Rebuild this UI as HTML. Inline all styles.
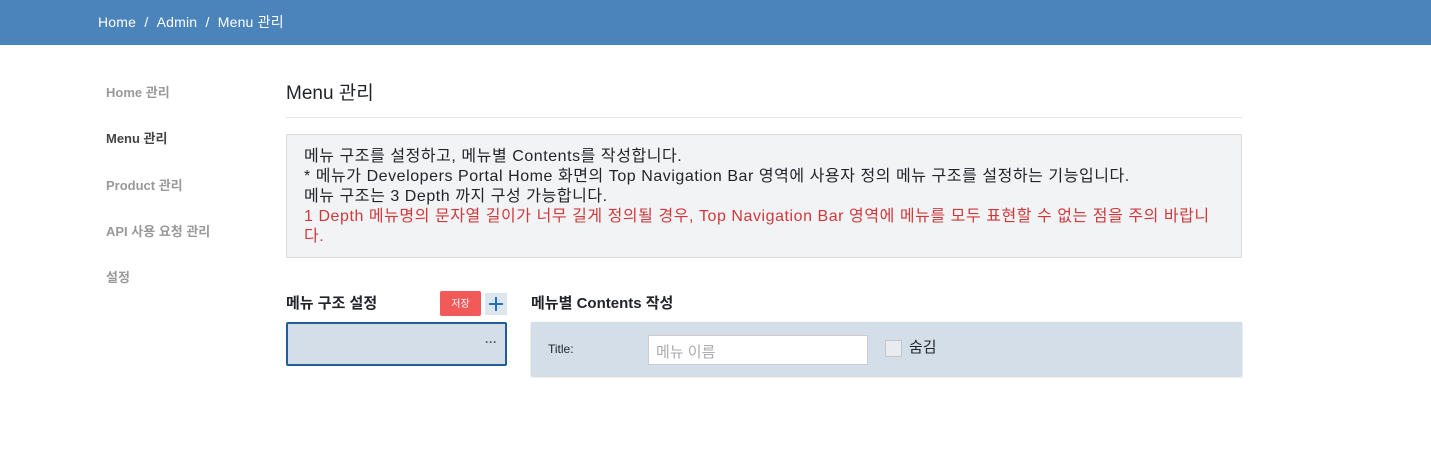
<!DOCTYPE html>
<html><head><meta charset="utf-8"><style>
*{margin:0;padding:0;box-sizing:border-box}
body{width:1431px;height:449px;background:#fff;font-family:"Liberation Sans","Noto Sans CJK KR",sans-serif;color:#212529;position:relative;overflow:hidden}
.top{position:absolute;left:0;top:0;width:1431px;height:45px;background:#4a84bb;color:#fff;font-size:14px}
.top span{position:absolute;top:12px;letter-spacing:0.2px}
.side{position:absolute;left:106px;font-size:13px;font-weight:bold;color:#999}
.a{position:absolute}
</style></head><body>
<div class="top"><span style="left:98px">Home&nbsp;&nbsp;/&nbsp;&nbsp;Admin&nbsp;&nbsp;/&nbsp;&nbsp;Menu 관리</span></div>
<div class="side" style="top:82px">Home 관리</div>
<div class="side" style="top:128px;color:#444">Menu 관리</div>
<div class="side" style="top:175px">Product 관리</div>
<div class="side" style="top:221px">API 사용 요청 관리</div>
<div class="side" style="top:267px">설정</div>
<div class="a" style="left:286px;top:78px;font-size:19px">Menu 관리</div>
<div class="a" style="left:286px;top:117px;width:956px;height:1px;background:#e5e5e5"></div>
<div class="a" style="left:286px;top:134px;width:956px;height:124px;background:#f2f3f5;border:1px solid #dcdcdc;padding:12px 17px;font-size:16px;line-height:20px;letter-spacing:0.55px">
메뉴 구조를 설정하고, 메뉴별 Contents를 작성합니다.<br>* 메뉴가 Developers Portal Home 화면의 Top Navigation Bar 영역에 사용자 정의 메뉴 구조를 설정하는 기능입니다.<br>메뉴 구조는 3 Depth 까지 구성 가능합니다.<br><span style="color:#d0393b">1 Depth 메뉴명의 문자열 길이가 너무 길게 정의될 경우, Top Navigation Bar 영역에 메뉴를 모두 표현할 수 없는 점을 주의 바랍니다.</span></div>
<div class="a" style="left:286px;top:292px;font-size:15px;font-weight:bold">메뉴 구조 설정</div>
<div class="a" style="left:440px;top:291px;width:41px;height:25px;background:#f25a5a;border-radius:2px;color:#fff;font-size:10px;text-align:center;line-height:27px">저장</div>
<div class="a" style="left:485px;top:293px;width:22px;height:22px;background:#dde6ef"><svg width="22" height="22"><path d="M11 4v14M4 11h14" stroke="#1a73c8" stroke-width="2"/></svg></div>
<div class="a" style="left:286px;top:322px;width:221px;height:44px;background:#d4dee8;border:2px solid #245d96;border-radius:2px"><span style="position:absolute;right:8px;top:11px;font-size:12px;font-weight:bold;color:#555">···</span></div>
<div class="a" style="left:531px;top:292px;font-size:15px;font-weight:bold">메뉴별 Contents 작성</div>
<div class="a" style="left:531px;top:322px;width:711px;height:54px;background:#d4dee8;box-shadow:0 1px 2px rgba(0,0,0,.2)">
<span style="position:absolute;left:17px;top:20px;font-size:12px">Title:</span>
<div style="position:absolute;left:117px;top:13px;width:220px;height:30px;background:#fff;border:1px solid #ccc;color:#aaa;font-size:15px;padding:5px 7px">메뉴 이름</div>
<div style="position:absolute;left:354px;top:18px;width:17px;height:17px;border:1px solid #c5c5c5;background:#e8ecf0"></div>
<span style="position:absolute;left:378px;top:14px;font-size:15px">숨김</span>
</div>
</body></html>
